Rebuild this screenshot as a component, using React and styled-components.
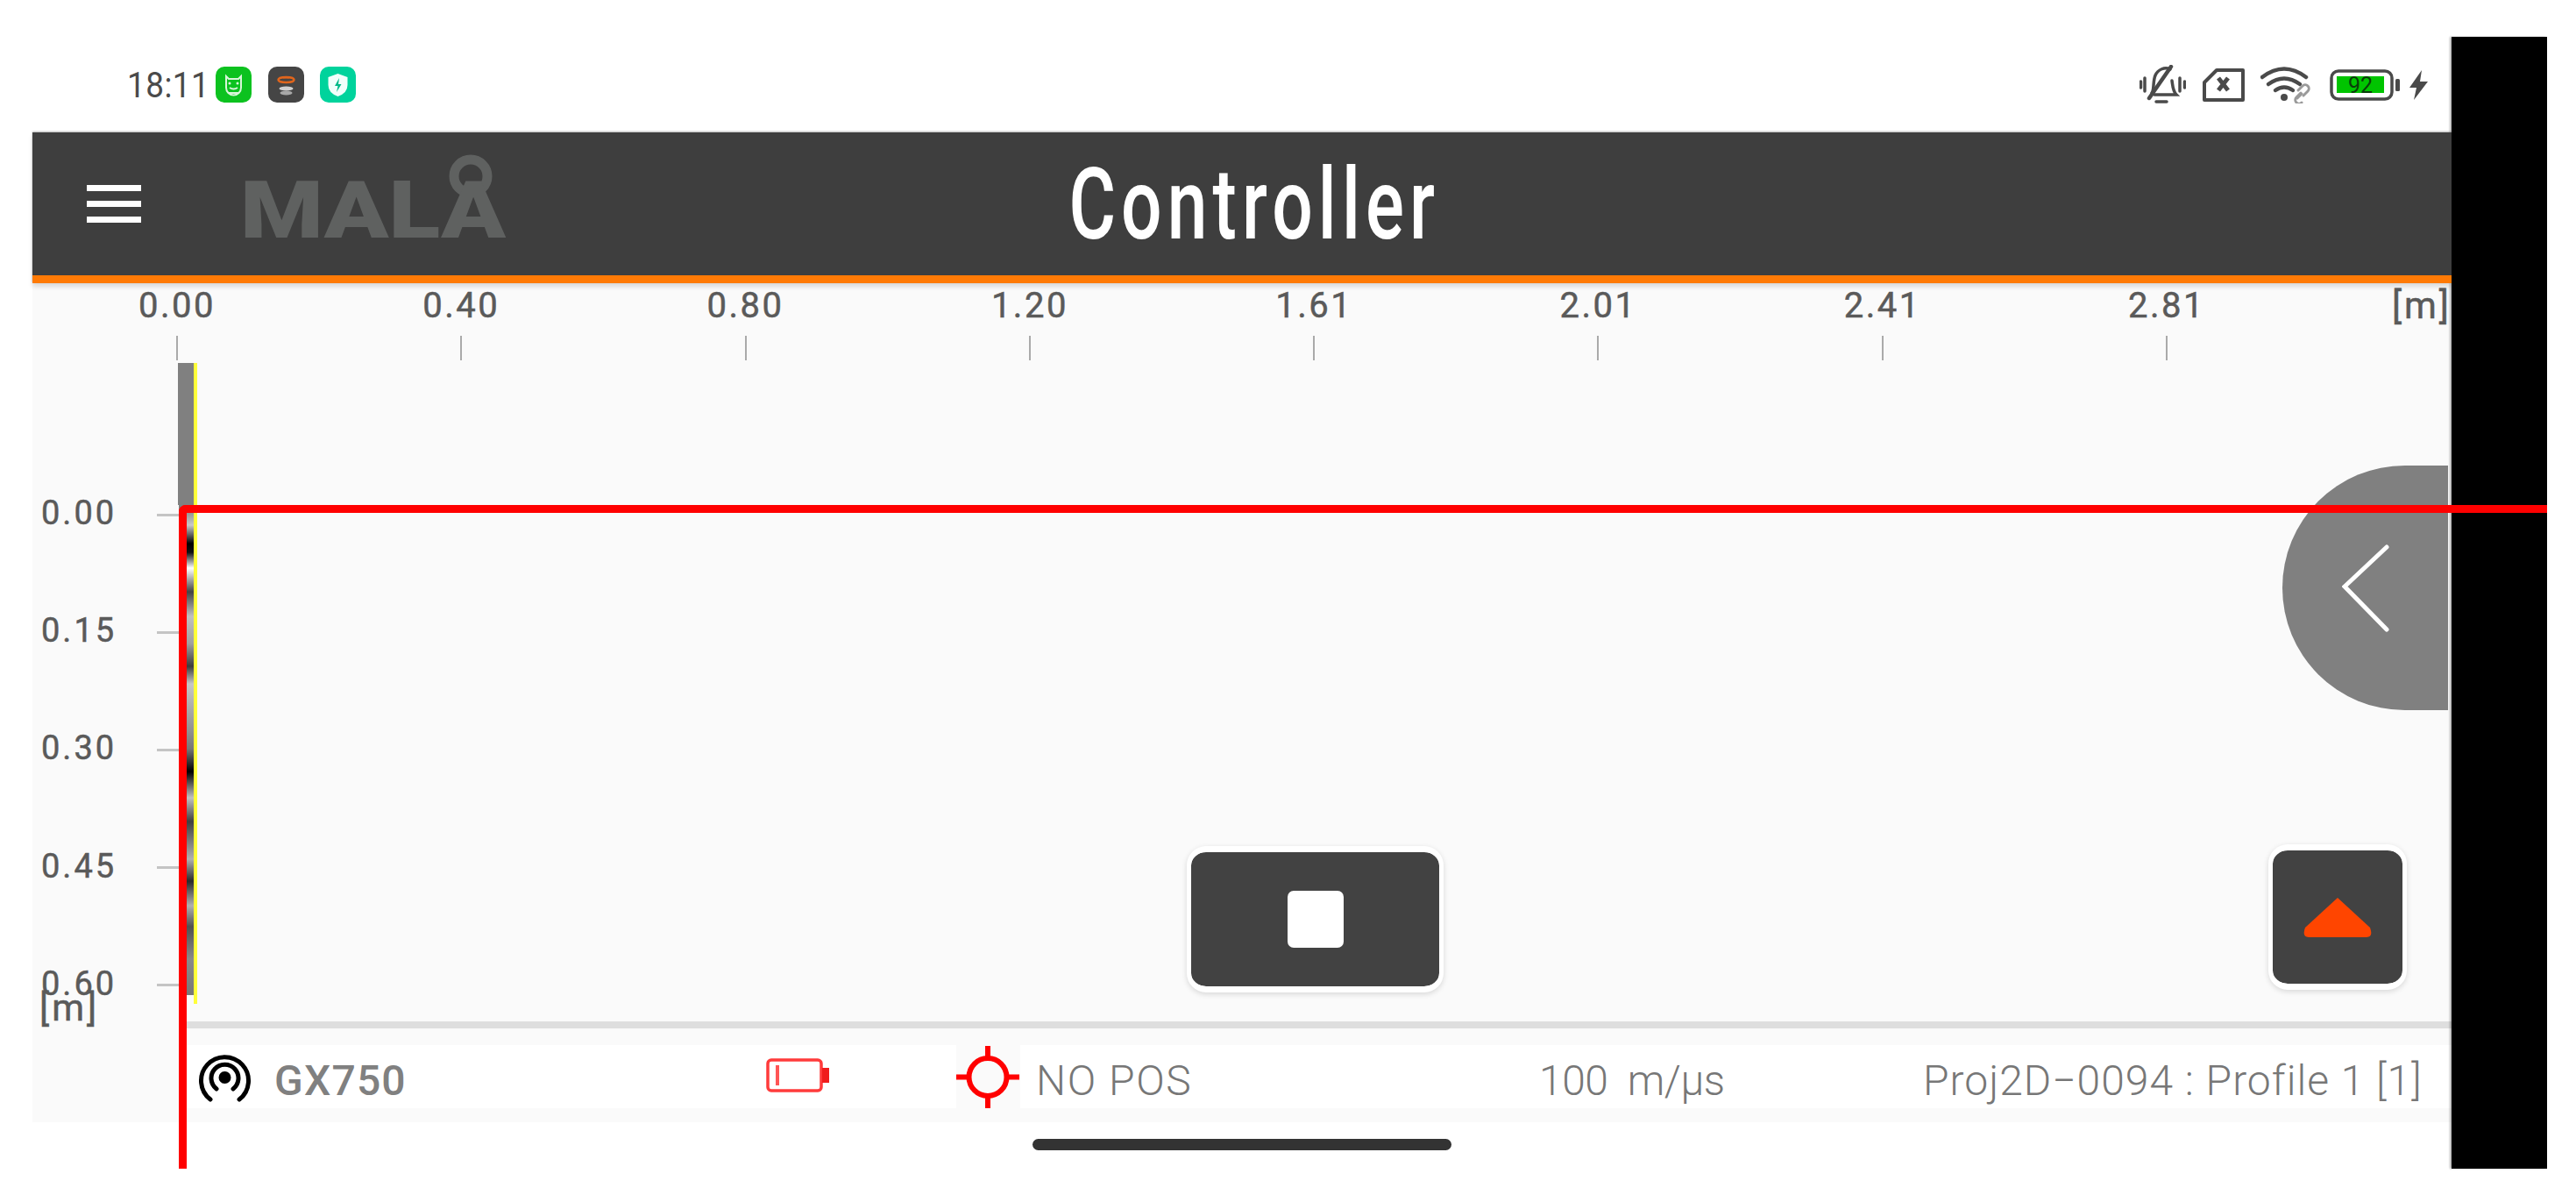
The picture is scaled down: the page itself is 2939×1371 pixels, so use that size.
import React from 'react';
import styled, { createGlobalStyle } from 'styled-components';

const Global = createGlobalStyle`
  html, body { margin: 0; padding: 0; background: #fff; }
  body { font-family: Roboto, "Liberation Sans", sans-serif; }
`;

const Page = styled.div`
  position: relative;
  width: 2939px;
  height: 1371px;
  display: flex;
  align-items: flex-start;
  overflow: hidden;
  background: #fff;
`;
const Screen = styled.div`
  width: 2797px;
  flex: none;
  display: flex;
  flex-direction: column;
`;
const BlackBar = styled.div`
  width: 109px;
  height: 1291px;
  margin-top: 42px;
  flex: none;
  box-sizing: border-box;
  background: #000;
  box-shadow: -2px 0 2px rgba(0, 0, 0, 0.28);
`;
const StatusBar = styled.div`
  height: 151px;
  box-sizing: border-box;
  padding: 42px 26px 0 145px;
  display: flex;
  align-items: center;
  justify-content: space-between;
`;
const StatusGroup = styled.div`
  display: flex;
  align-items: center;
`;
const ClockBox = styled.div`
  width: 101px;
`;
const Clock = styled.span`
  display: inline-block;
  font-size: 41px;
  color: #4a4a4a;
  letter-spacing: 0.5px;
  transform: scaleX(0.9);
  transform-origin: left center;
`;
const AppIcon = styled.svg`
  display: block;
  width: 41px;
  height: 41px;
  margin-right: 18.5px;
`;
const SysIcon = styled.svg`
  display: block;
  margin-left: ${(p) => p.$gap}px;
`;
const BatteryNumber = styled.text`
  font-family: Roboto, sans-serif;
  font-size: 25px;
  fill: #0a3d0a;
`;
const AppShell = styled.div`
  margin-left: 37px;
  display: flex;
  flex-direction: column;
`;
const Header = styled.header`
  position: relative;
  z-index: 2;
  height: 172px;
  box-sizing: border-box;
  flex: none;
  display: flex;
  align-items: center;
  background: #3e3e3e;
  border-bottom: 9px solid #ff7a05;
  box-shadow: 0 4px 5px rgba(0, 0, 0, 0.13), 0 -1px 2px rgba(0, 0, 0, 0.3);
`;
const Menu = styled.div`
  width: 62px;
  margin-left: 62px;
  display: flex;
  flex-direction: column;
  gap: 11px;
`;
const MenuBar = styled.span`
  height: 7px;
  background: #fff;
`;
const Logo = styled.svg`
  display: block;
  margin: 0 0 16px 117px;
  flex: none;
  overflow: visible;
`;
const LogoText = styled.text`
  font-family: Roboto, sans-serif;
  font-weight: 900;
  font-size: 90px;
  fill: #5f6160;
`;
const TitleBox = styled.div`
  width: 418px;
  margin-left: 648px;
  display: flex;
  justify-content: center;
`;
const Title = styled.h1`
  margin: 0;
  flex: none;
  font-weight: 500;
  font-size: 114px;
  line-height: 1;
  letter-spacing: 8.5px;
  color: #fff;
  transform: scaleX(0.72);
`;
const Canvas = styled.main`
  height: 957px;
  flex: none;
  display: flex;
  flex-direction: column;
  background: #fafafa;
`;
const Ruler = styled.div`
  position: relative;
  height: 88px;
  flex: none;
  padding-left: 2.85px;
  display: flex;
`;
const RulerCell = styled.div`
  width: 324.3px;
  flex: none;
  display: flex;
  flex-direction: column;
  align-items: center;
`;
const RulerLabel = styled.span`
  height: 46px;
  margin-top: 3px;
  margin-bottom: 11px;
  line-height: 46px;
  font-size: 40px;
  letter-spacing: 2.5px;
  -webkit-text-stroke: 0.5px #5a5a5a;
  color: #5a5a5a;
`;
const RulerTick = styled.span`
  width: 2px;
  height: 28px;
  background: #aaa;
`;
const RulerUnit = styled.span`
  position: absolute;
  right: 0;
  top: 3px;
  line-height: 46px;
  font-size: 42px;
  letter-spacing: 3px;
  -webkit-text-stroke: 0.5px #5a5a5a;
  color: #5a5a5a;
`;
const Body = styled.div`
  flex: 1;
  min-height: 0;
  display: flex;
`;
const YAxis = styled.div`
  position: relative;
  width: 167px;
  flex: none;
  box-sizing: border-box;
  padding: 109px 0 0 10px;
  display: flex;
  flex-direction: column;
`;
const YRow = styled.div`
  height: 134.2px;
  flex: none;
  display: flex;
  align-items: center;
  justify-content: space-between;
`;
const YLabel = styled.span`
  margin-top: -4px;
  font-size: 38px;
  letter-spacing: 3px;
  -webkit-text-stroke: 0.5px #5a5a5a;
  color: #5a5a5a;
`;
const YTick = styled.span`
  width: 25px;
  height: 3px;
  background: #c4c4c4;
`;
const YUnit = styled.span`
  position: absolute;
  left: 8px;
  top: 714px;
  font-size: 42px;
  letter-spacing: 3px;
  -webkit-text-stroke: 0.5px #5a5a5a;
  color: #5a5a5a;
`;
const RightCol = styled.div`
  flex: 1;
  min-width: 0;
  display: flex;
  flex-direction: column;
`;
const Plot = styled.div`
  position: relative;
  height: 754px;
  flex: none;
`;
const TraceColumn = styled.div`
  position: absolute;
  left: 0;
  top: 3px;
  width: 17px;
  height: 721px;
  background: linear-gradient(
    to bottom,
    #808080 0,
    #808080 165px,
    #c8c8c8 185px,
    #000 206px,
    #111 216px,
    #fff 234px,
    #444 261px,
    #c0c0c0 289px,
    #a0a0a0 320px,
    #3c3c3c 346px,
    #c6c6c6 366px,
    #909090 420px,
    #777 440px,
    #000 466px,
    #c0c0c0 496px,
    #404040 523px,
    #b0b0b0 566px,
    #2a2a2a 591px,
    #b0b0b0 619px,
    #505050 643px,
    #8a8a8a 680px,
    #777 721px
  );
`;
const TraceCap = styled.div`
  position: absolute;
  left: -1px;
  top: 3px;
  width: 1px;
  height: 162px;
  background: #808080;
`;
const YellowLine = styled.div`
  position: absolute;
  left: 17px;
  top: 3px;
  width: 4px;
  height: 731px;
  background: #ffff3a;
`;
const SideHandle = styled.button`
  position: absolute;
  right: 4px;
  top: 120px;
  width: 189px;
  height: 279px;
  padding: 0;
  border: 0;
  border-radius: 140px 0 0 140px;
  background: #808080;
  display: flex;
  align-items: center;
  justify-content: center;
`;
const FloatButton = styled.button`
  position: absolute;
  left: ${(p) => p.$left}px;
  top: ${(p) => p.$top}px;
  width: ${(p) => p.$w}px;
  height: ${(p) => p.$h}px;
  padding: 0;
  box-sizing: border-box;
  border-style: solid;
  border-color: #fff;
  border-width: 7px 5px;
  border-radius: 22px;
  background: #424242;
  background-clip: padding-box;
  box-shadow: 0 2px 6px rgba(0, 0, 0, 0.14);
  display: flex;
  align-items: center;
  justify-content: center;
`;
const StopSquare = styled.span`
  width: 64px;
  height: 65px;
  border-radius: 7px;
  background: #fff;
`;
const Separator = styled.div`
  height: 8px;
  flex: none;
  background: #dedede;
`;
const Footer = styled.footer`
  height: 72px;
  margin-top: 19px;
  flex: none;
  background: #fff;
  display: grid;
  grid-template-columns: 670px 217px 73px 592px 438px 1fr;
  align-items: stretch;
`;
const FooterCell = styled.div`
  display: flex;
  align-items: center;
  padding-left: ${(p) => p.$pad || 0}px;
  background: ${(p) => p.$bg || 'transparent'};
`;
const DeviceName = styled.span`
  margin: 8px 0 0 26px;
  font-size: 48px;
  font-weight: 500;
  letter-spacing: 1.2px;
  color: #808080;
`;
const FooterText = styled.span`
  margin-top: 8px;
  font-size: 48px;
  font-weight: 300;
  letter-spacing: ${(p) => p.$ls}px;
  color: #777;
  white-space: pre;
`;
const HomeRow = styled.div`
  flex: none;
  display: flex;
  justify-content: center;
  padding-top: 19px;
`;
const HomeBar = styled.div`
  width: 478px;
  height: 13px;
  border-radius: 7px;
  background: #333;
`;
const RedCursor = styled.div`
  position: absolute;
  z-index: 5;
  left: 204px;
  top: 576px;
  right: 33px;
  bottom: 38px;
  border-top: 9px solid #f00;
  border-left: 9px solid #f00;
  border-top-left-radius: 8px;
  pointer-events: none;
`;

const rulerValues = ['0.00', '0.40', '0.80', '1.20', '1.61', '2.01', '2.41', '2.81'];
const depthValues = ['0.00', '0.15', '0.30', '0.45', '0.60'];

const GreenApp = () => (
  <AppIcon viewBox="0 0 41 41">
    <rect width="41" height="41" rx="10" fill="#0cc21f" />
    <g fill="none" stroke="#d9f6da" strokeWidth="2">
      <path d="M12 11 l3 3 h11 l3 -3 v13 a8.5 8.5 0 0 1 -17 0 z" />
      <path d="M16 24 q4.500 3 9 0" />
      <path d="M15 30 h11" />
    </g>
    <circle cx="16" cy="19" r="1.500" fill="#d9f6da" />
    <circle cx="25" cy="19" r="1.500" fill="#d9f6da" />
  </AppIcon>
);
const DarkApp = () => (
  <AppIcon viewBox="0 0 41 41">
    <rect width="41" height="41" rx="10" fill="#454545" />
    <ellipse cx="20.500" cy="15" rx="9" ry="3" fill="none" stroke="#e0651c" strokeWidth="2.500" />
    <path d="M17 11.500 h7 v2 h-7 z" fill="#e0651c" />
    <ellipse cx="20.500" cy="25" rx="8" ry="2.500" fill="#cfcfcf" />
    <ellipse cx="20.500" cy="30" rx="7" ry="2.500" fill="#a8a8a8" />
  </AppIcon>
);
const TealApp = () => (
  <AppIcon viewBox="0 0 41 41">
    <rect width="41" height="41" rx="10" fill="#00d39c" />
    <path d="M20.500 8 l11 4 v9 q0 9 -11 13 q-11 -4 -11 -13 v-9 z" fill="#f1fffb" />
    <path d="M22 13 l-5 9 h3.500 l-1.500 7 l5.500 -9 h-3.500 z" fill="#00b988" />
  </AppIcon>
);
const BellOff = () => (
  <SysIcon width="53" height="46" viewBox="0 0 53 46" fill="none" stroke="#4a4a4a" strokeWidth="3.500" strokeLinecap="round">
    <path d="M14 32 c3 -3 1 -13 4 -20 c3 -7 11 -10 17 -7" />
    <path d="M37 18 c1 7 1 12 5 16 h-25" />
    <path d="M11 38 L36 2" strokeWidth="4.500" />
    <path d="M19 42 h12" />
    <path d="M6 15 v15 M1.500 19 v7 M46 15 v15 M51.500 19 v7" />
  </SysIcon>
);
const SimX = () => (
  <SysIcon $gap={19} width="48" height="38" viewBox="0 0 48 38" fill="none" stroke="#4a4a4a" strokeWidth="4" strokeLinejoin="round">
    <path d="M16 2 h30 v34 h-44 v-20 z" />
    <path d="M18 11 l11 14 M29 11 l-11 14" strokeWidth="5" />
  </SysIcon>
);
const WifiLink = () => (
  <SysIcon $gap={18} width="61" height="42" viewBox="0 0 61 42" fill="none" stroke="#4a4a4a" strokeWidth="4.500" strokeLinecap="round">
    <path d="M2 12 q25 -19 50 0" />
    <path d="M9 20 q18 -13 36 0" />
    <path d="M17 27 q10 -7 20 0" />
    <circle cx="27" cy="35" r="4" fill="#4a4a4a" stroke="none" />
    <g stroke="#9a9a9a" strokeWidth="3">
      <path d="M42 36 l5 -5 M47 41 a4 4 0 0 1 -6 -6 l5 -5" />
      <path d="M49 33 l5 -5 a4 4 0 0 0 -6 -6 l-5 5" />
    </g>
  </SysIcon>
);
const PhoneBattery = () => (
  <SysIcon $gap={18} width="81" height="36" viewBox="0 0 81 36">
    <rect x="2" y="2" width="69" height="32" rx="8" fill="#fff" stroke="#4a4a4a" strokeWidth="3.500" />
    <rect x="8" y="8" width="54" height="19" fill="#00c400" />
    <rect x="75" y="11" width="5" height="14" rx="1.500" fill="#4a4a4a" />
    <BatteryNumber x="35" y="27" textAnchor="middle">92</BatteryNumber>
  </SysIcon>
);
const Bolt = () => (
  <SysIcon $gap={9} width="23" height="34" viewBox="0 0 23 34">
    <path d="M15 0 L1 20 h8 L6 34 L22 13 h-9 z" fill="#4a4a4a" />
  </SysIcon>
);
const SignalIcon = () => (
  <svg width="61" height="57" viewBox="0 0 61 57" fill="none" stroke="#000" strokeWidth="5" strokeLinecap="round" style={{ display: 'block', flex: 'none' }}>
    <path d="M14 54 A27 27 0 1 1 47 54" />
    <path d="M21 42 A15.500 15.500 0 1 1 40 42" />
    <circle cx="30.500" cy="29" r="7" fill="#000" stroke="none" />
  </svg>
);
const LowBattery = () => (
  <svg width="72" height="39" viewBox="0 0 72 39" fill="none" style={{ display: 'block', flex: 'none', marginTop: '-3px' }}>
    <rect x="2" y="2" width="61" height="35" rx="4" stroke="#ff3b3b" strokeWidth="3.500" />
    <rect x="11" y="8" width="4" height="23" fill="#ff5555" />
    <rect x="64" y="11" width="8" height="17" fill="#f01c1c" />
  </svg>
);
const Crosshair = () => (
  <svg width="72" height="71" viewBox="0 0 72 71" fill="none" stroke="#f00" style={{ display: 'block' }}>
    <circle cx="36" cy="35.500" r="21.500" strokeWidth="6" />
    <path d="M36 0 V13 M36 58 V71 M0 35.500 H13 M59 35.500 H72" strokeWidth="6" />
  </svg>
);

export default function App() {
  return (
    <Page>
      <Global />
      <Screen>
        <StatusBar>
          <StatusGroup>
            <ClockBox>
              <Clock>18:11</Clock>
            </ClockBox>
            <GreenApp />
            <DarkApp />
            <TealApp />
          </StatusGroup>
          <StatusGroup>
            <BellOff />
            <SimX />
            <WifiLink />
            <PhoneBattery />
            <Bolt />
          </StatusGroup>
        </StatusBar>
        <AppShell>
          <Header>
            <Menu>
              <MenuBar />
              <MenuBar />
              <MenuBar />
            </Menu>
            <Logo width="296" height="94" viewBox="0 0 296 94">
              <circle cx="259" cy="23" r="19" fill="none" stroke="#5f6160" strokeWidth="11" />
              <LogoText x="-4" y="93" textLength="303" lengthAdjust="spacingAndGlyphs">MALA</LogoText>
            </Logo>
            <TitleBox>
              <Title>Controller</Title>
            </TitleBox>
          </Header>
          <Canvas>
            <Ruler>
              {rulerValues.map((v) => (
                <RulerCell key={v}>
                  <RulerLabel>{v}</RulerLabel>
                  <RulerTick />
                </RulerCell>
              ))}
              <RulerUnit>[m]</RulerUnit>
            </Ruler>
            <Body>
              <YAxis>
                {depthValues.map((v) => (
                  <YRow key={v}>
                    <YLabel>{v}</YLabel>
                    <YTick />
                  </YRow>
                ))}
                <YUnit>[m]</YUnit>
              </YAxis>
              <RightCol>
                <Plot>
                  <TraceCap />
                  <TraceColumn />
                  <YellowLine />
                  <SideHandle aria-label="Open panel">
                    <svg width="54" height="100" viewBox="0 0 54 100" fill="none" stroke="#fff" strokeWidth="5" strokeLinecap="round">
                      <path d="M51 3 L3 48 L51 97" />
                    </svg>
                  </SideHandle>
                  <FloatButton $left={1150} $top={554} $w={293} $h={167} aria-label="Stop">
                    <StopSquare />
                  </FloatButton>
                  <FloatButton $left={2384} $top={552} $w={158} $h={166} aria-label="Expand">
                    <svg width="78" height="45" viewBox="0 0 78 45">
                      <path d="M39 0 L76 34 Q80 45 72 45 H6 Q-2 45 2 34 Z" fill="#ff4500" />
                    </svg>
                  </FloatButton>
                </Plot>
                <Separator />
                <Footer>
                  <FooterCell $pad={22}>
                    <SignalIcon />
                    <DeviceName>GX750</DeviceName>
                  </FooterCell>
                  <FooterCell>
                    <LowBattery />
                  </FooterCell>
                  <FooterCell $bg="#fafafa">
                    <Crosshair />
                  </FooterCell>
                  <FooterCell $pad={18}>
                    <FooterText $ls={1.6}>NO POS</FooterText>
                  </FooterCell>
                  <FooterCell>
                    <FooterText $ls={-0.5}>100  m/µs</FooterText>
                  </FooterCell>
                  <FooterCell>
                    <FooterText $ls={1}>Proj2D−0094 : Profile 1 [1]</FooterText>
                  </FooterCell>
                </Footer>
              </RightCol>
            </Body>
          </Canvas>
          <HomeRow>
            <HomeBar />
          </HomeRow>
        </AppShell>
      </Screen>
      <BlackBar />
      <RedCursor />
    </Page>
  );
}
